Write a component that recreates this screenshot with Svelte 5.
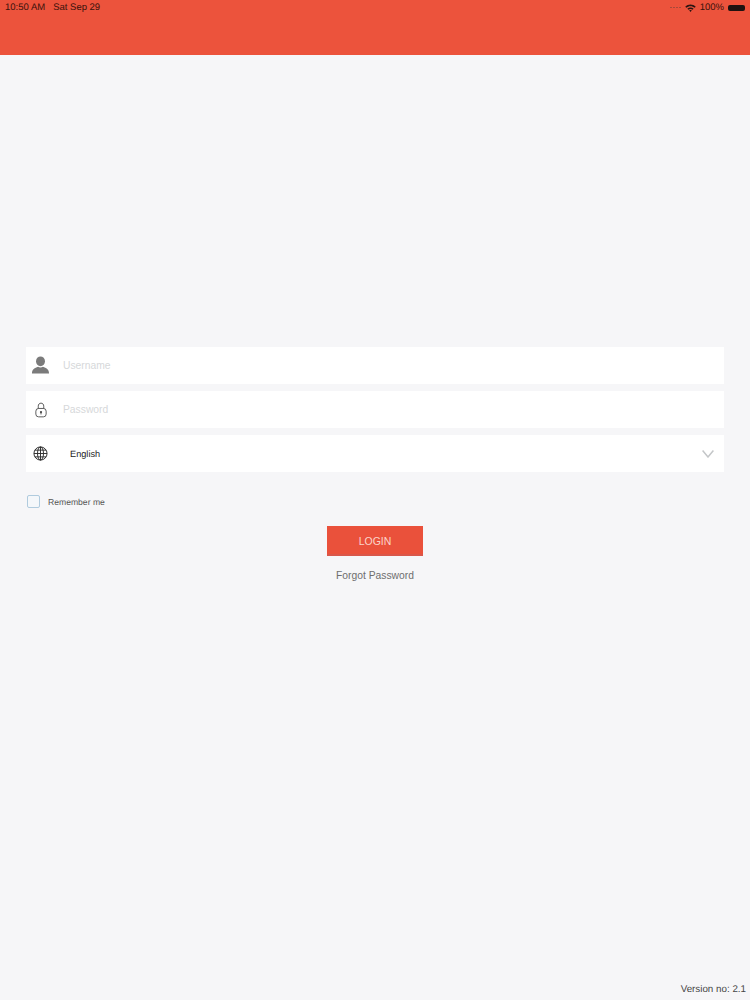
<script lang="ts">
  let username = $state('')
  let password = $state('')
  let remember = $state(false)
</script>

<div class="page">
  <header class="topbar">
    <div class="status">
      <span class="clock">10:50 AM</span>
      <span class="date">Sat Sep 29</span>
      <span class="right">
        <span class="signal">
          <i></i><i></i><i></i><i></i>
        </span>
        <svg class="wifi" viewBox="0 0 14 10" width="11" height="8" aria-hidden="true">
          <path d="M0.3 3.3 C3.9 -0.4 10.1 -0.4 13.7 3.3 L12.3 4.8 C9.4 1.9 4.6 1.9 1.7 4.8 Z" fill="#2c1512" />
          <path d="M3 5.9 C5.2 3.8 8.8 3.8 11 5.9 L9.6 7.3 C8.2 6 5.8 6 4.4 7.3 Z" fill="#2c1512" />
          <path d="M5.4 8.3 C6.3 7.5 7.7 7.5 8.6 8.3 L7 10 Z" fill="#2c1512" />
        </svg>
        <span class="pct">100%</span>
        <span class="battery"></span>
      </span>
    </div>
  </header>

  <main class="form">
    <div class="fields">
      <label class="field">
        <span class="icon">
          <svg viewBox="0 0 20 20" width="19" height="19" aria-hidden="true">
            <ellipse cx="10" cy="5.6" rx="4.7" ry="5.2" fill="#7b7b7b" />
            <path d="M1 18.5 C1 14 4 12.6 7.4 11.4 C9 12.4 11 12.4 12.6 11.4 C16 12.6 19 14 19 18.5 Z" fill="#7b7b7b" />
          </svg>
        </span>
        <input class="text-input" type="text" placeholder="Username" bind:value={username} />
      </label>

      <label class="field">
        <span class="icon">
          <svg viewBox="0 0 14 18" width="12" height="16" aria-hidden="true">
            <path d="M3.8 7.5 V4.6 C3.8 2.5 5 1 7 1 C9 1 10.2 2.5 10.2 4.6 V7.5" fill="none" stroke="#444" stroke-width="1" />
            <rect x="1" y="7.2" width="12" height="9.8" rx="3.2" fill="none" stroke="#444" stroke-width="1" />
            <circle cx="7" cy="11.4" r="1.3" fill="#444" />
            <rect x="6.5" y="11.6" width="1" height="2.6" fill="#444" />
          </svg>
        </span>
        <input class="text-input" type="password" placeholder="Password" bind:value={password} />
      </label>

      <div class="field select">
        <span class="icon">
          <svg viewBox="0 0 16 16" width="15" height="15" aria-hidden="true">
            <g fill="none" stroke="#2b2b2b" stroke-width="1">
              <circle cx="8" cy="8" r="7" />
              <ellipse cx="8" cy="8" rx="3.2" ry="7" />
              <path d="M8 1 V15 M1 8 H15 M2 4.4 H14 M2 11.6 H14" />
            </g>
          </svg>
        </span>
        <span class="value">English</span>
        <svg class="chevron" viewBox="0 0 12 8" width="12" height="8" aria-hidden="true">
          <path d="M0.6 0.6 L6 7 L11.4 0.6" fill="none" stroke="#c4c6c8" stroke-width="1.5" />
        </svg>
      </div>
    </div>

    <label class="remember">
      <input type="checkbox" bind:checked={remember} />
      <span>Remember me</span>
    </label>

    <div class="actions">
      <button class="login" type="button">LOGIN</button>
      <button class="forgot" type="button">Forgot Password</button>
    </div>
  </main>

  <footer class="version">Version no: 2.1</footer>
</div>

<style>
  :global(body) {
    margin: 0;
    background: #f6f6f8;
  }

  .page {
    display: flex;
    flex-direction: column;
    height: 1000px;
    overflow: hidden;
    background: #f6f6f8;
    font-family: "Liberation Sans", Arial, sans-serif;
    text-rendering: geometricPrecision;
  }

  .topbar {
    flex: none;
    height: 55px;
    background: #ec533c;
  }

  .status {
    display: flex;
    align-items: center;
    gap: 8px;
    height: 15px;
    padding: 0 5px;
    font-size: 9.5px;
    color: #3a120c;
  }

  .right {
    display: flex;
    align-items: center;
    gap: 3px;
    margin-left: auto;
  }

  .signal {
    display: flex;
    gap: 1px;
    margin-right: 1px;
    align-items: flex-end;
  }

  .signal i {
    width: 2px;
    height: 1px;
    background: #a8493a;
  }

  .wifi {
    display: block;
  }

  .pct {
    margin: 0 1px;
  }

  .battery {
    width: 17px;
    height: 6px;
    border-radius: 2px;
    background: #1e1210;
  }

  .form {
    flex: none;
    padding: 292px 26px 0;
  }

  .fields {
    display: flex;
    flex-direction: column;
    gap: 7px;
  }

  .field {
    display: flex;
    align-items: center;
    height: 37px;
    background: #fff;
  }

  .icon {
    display: flex;
    flex: none;
    align-items: center;
    justify-content: center;
    width: 29px;
    margin-right: 8px;
  }

  .icon svg {
    display: block;
  }

  .text-input {
    flex: 1;
    min-width: 0;
    padding: 0 0 1px;
    border: 0;
    outline: 0;
    background: none;
    font: inherit;
    font-size: 10.3px;
    color: #333;
  }

  .text-input::placeholder {
    color: #d6d8da;
    opacity: 1;
  }

  .value {
    margin-left: 7px;
    font-size: 9.2px;
    color: #1a1a1a;
  }

  .chevron {
    margin-left: auto;
    margin-right: 10px;
  }

  .remember {
    display: flex;
    align-items: center;
    gap: 8px;
    margin: 23px 0 0 1px;
    font-size: 8.6px;
    color: #555;
  }

  .remember input {
    appearance: none;
    width: 13px;
    height: 13px;
    margin: 0;
    border: 1px solid #b0cbde;
    border-radius: 2px;
    background: #f4f7fa;
  }

  .actions {
    display: flex;
    flex-direction: column;
    align-items: center;
    margin-top: 18px;
  }

  .login {
    width: 96px;
    height: 30px;
    padding: 1px 0 0;
    border: 0;
    border-bottom: 2px solid #d9574a;
    background: #ea513b;
    font: inherit;
    font-size: 10.5px;
    color: #fbd5ca;
  }

  .forgot {
    margin-top: 14px;
    padding: 0;
    border: 0;
    background: none;
    font: inherit;
    font-size: 10.3px;
    color: #6e6e6e;
  }

  .version {
    margin-top: auto;
    padding: 0 4px 5px 0;
    text-align: right;
    font-size: 9.8px;
    color: #444;
  }
</style>
